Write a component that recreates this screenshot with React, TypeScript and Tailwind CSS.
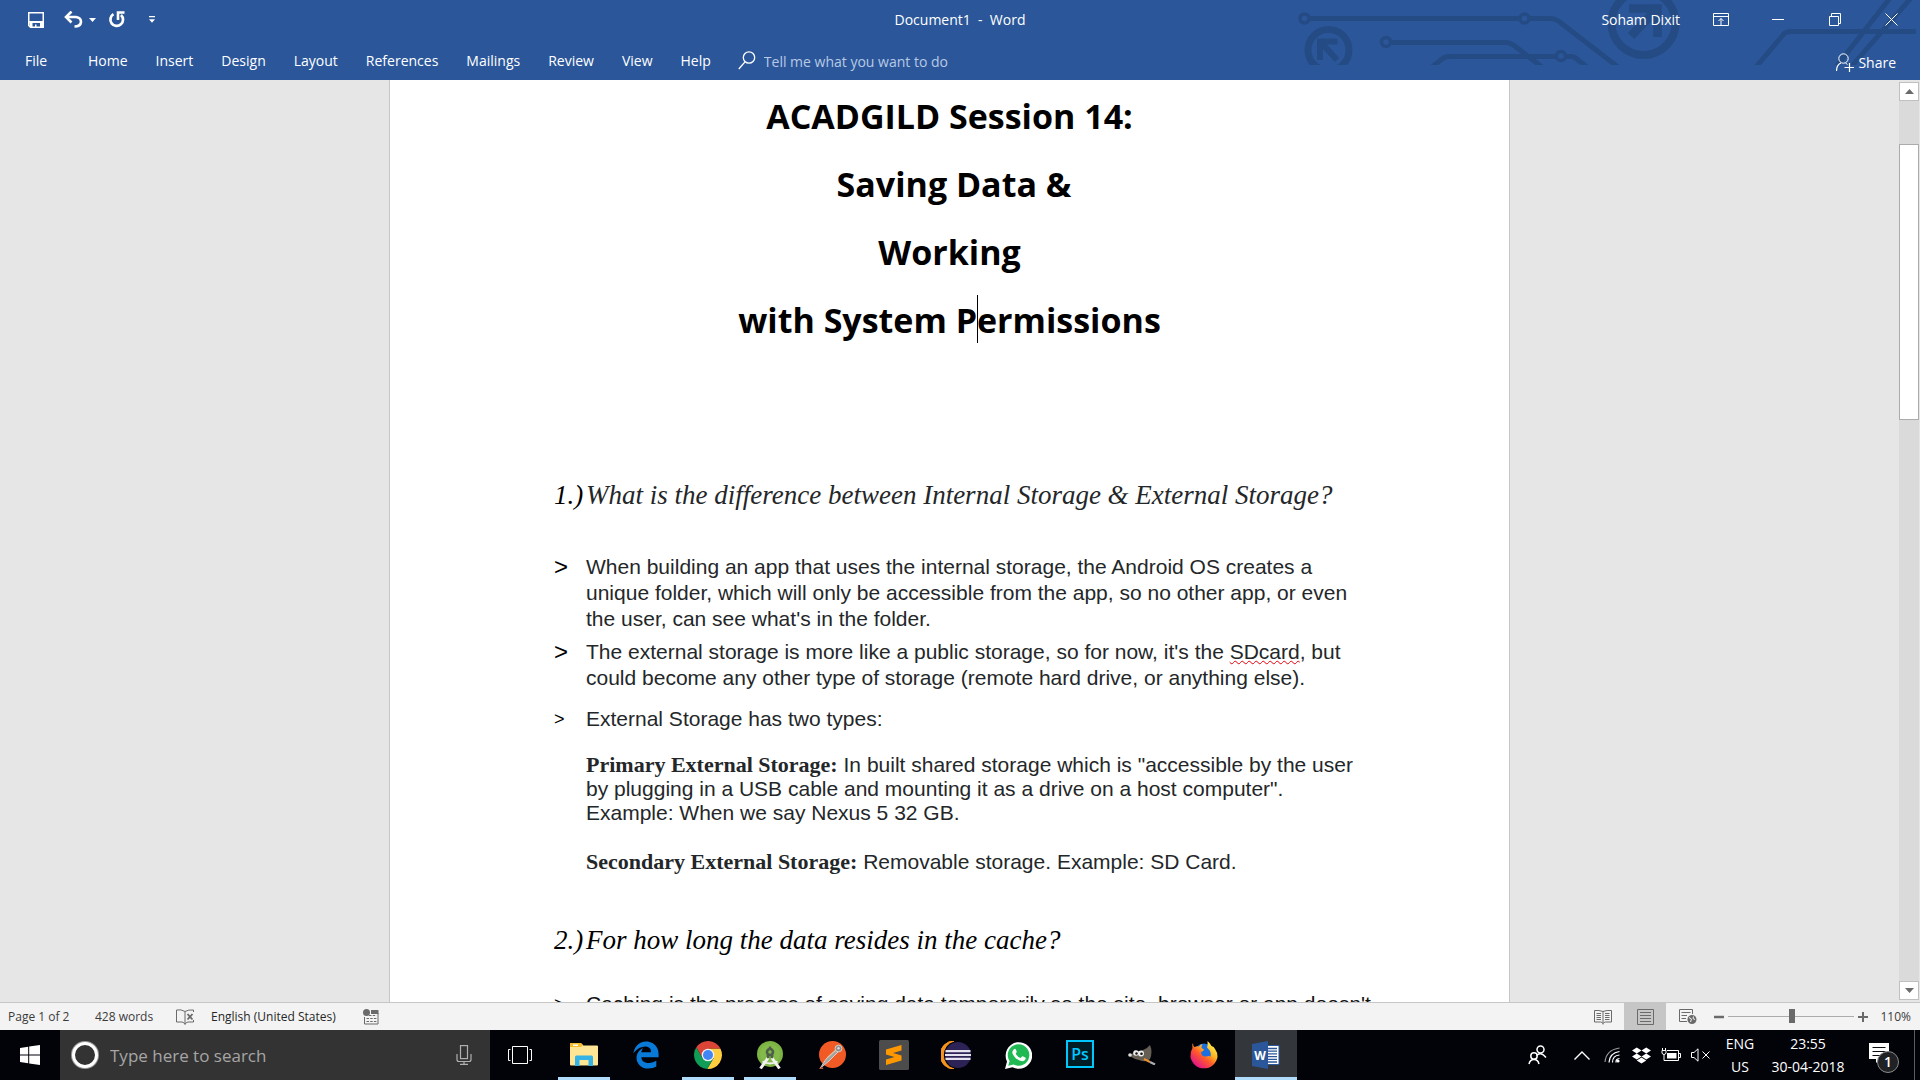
import type { ReactNode } from "react";
import { FaDropbox, FaEdgeLegacy } from "react-icons/fa";

const ui = "font-['Open_Sans','Noto_Sans',sans-serif]";

/* ---------- Title bar ---------- */

function HeaderPattern() {
  return (
    <svg className="pointer-events-none absolute top-0 right-0" width="640" height="65" viewBox="0 0 640 65" fill="none" stroke="#254b84" strokeWidth="5" aria-hidden="true">
      <circle cx="24.5" cy="18.5" r="4.5" strokeWidth="3.5" />
      <path d="M29 18.5H240M249 18.5H270Q276 18.5 281 23L338 67" />
      <circle cx="244.5" cy="18.5" r="4.5" strokeWidth="3.5" />
      <circle cx="48.5" cy="50" r="20.5" strokeWidth="7" />
      <path d="M57.500 41.500H40V60M41 42.500L57 60" strokeWidth="6" />
      <circle cx="106" cy="42" r="4.500" strokeWidth="3.500" />
      <path d="M111 42.500H225Q231 42.500 236 47L262 67" />
      <path d="M152 67L162 59Q165 56.500 170 56.500H276" />
      <circle cx="281" cy="56" r="4.500" strokeWidth="3.500" />
      <path d="M286 56.500H291Q295 56.500 298 60L307 67" />
      <circle cx="363.500" cy="23" r="32" strokeWidth="8" />
      <path d="M349 8.500H377.500V37" strokeWidth="8.500" />
      <path d="M351 36L376 10" strokeWidth="9" />
      <path d="M476 67L503 35Q505.500 31.500 511 31.500H636" />
      <path d="M556 67L610 -2M571 67L631 -2" />
    </svg>
  );
}

function IconButton({ label, className, children }: { label: string; className?: string; children: ReactNode }) {
  return (
    <button type="button" aria-label={label} className={"flex shrink-0 items-center justify-center " + (className ?? "")}>
      {children}
    </button>
  );
}

function TitleBar() {
  return (
    <div className="relative grid h-[39px] grid-cols-[1fr_auto_1fr] items-center text-sm">
      <div className="flex items-center pl-7">
        <IconButton label="Save">
          <svg width="16" height="16" viewBox="0 0 16 16" fill="none" stroke="#fff">
            <path d="M.75 .75H15.250V15.250H2.500L.75 13.500Z" strokeWidth="1.500" />
            <path d="M1 9H15V15H12V11H4.500V15H2Z" fill="#fff" stroke="none" />
            <path d="M7 12.500H8.500V16H7Z" fill="#fff" stroke="none" />
          </svg>
        </IconButton>
        <IconButton label="Undo" className="ml-5">
          <svg width="19" height="17" viewBox="0 0 19 17" fill="none" stroke="#fff">
            <path d="M3 6H12Q17 6.500 17 11Q16.500 15.500 10.500 15.500" strokeWidth="2.600" />
            <path d="M7.500 .500L2 6L7.500 11.500" strokeWidth="2.600" />
          </svg>
        </IconButton>
        <IconButton label="Undo list" className="ml-1.5">
          <svg width="7" height="4" viewBox="0 0 7 4"><path d="M0 0H7L3.500 4Z" fill="#fff" /></svg>
        </IconButton>
        <IconButton label="Repeat" className="ml-3">
          <svg width="17" height="17" viewBox="0 0 17 17" fill="none" stroke="#fff">
            <path d="M5.500 3.200A6.300 6.300 0 1 0 13 4" strokeWidth="2.700" />
            <path d="M10 9V1.500H16.500" strokeWidth="2.600" />
          </svg>
        </IconButton>
        <IconButton label="Customize toolbar" className="ml-6">
          <svg width="6" height="7" viewBox="0 0 6 7"><path d="M0 0H6V1.200H0ZM0 3.200H6L3 6.800Z" fill="#fff" /></svg>
        </IconButton>
      </div>
      <div className="whitespace-pre">Document1  -  Word</div>
      <div className="flex h-full items-center justify-end">
        <span className="pr-3">Soham Dixit</span>
        <IconButton label="Ribbon display options" className="h-full w-[57px]">
          <svg width="16" height="13" viewBox="0 0 16 13" fill="none" stroke="#fff">
            <path d="M.5 .5H15.500V12.500H.5ZM.5 3.500H15.500M8 12V5.500M5.500 8L8 5.500L10.500 8" />
          </svg>
        </IconButton>
        <IconButton label="Minimize" className="h-full w-[57px]">
          <svg width="12" height="13" viewBox="0 0 12 13"><path d="M0 6.500H12" stroke="#fff" /></svg>
        </IconButton>
        <IconButton label="Restore" className="h-full w-[57px]">
          <svg width="12" height="13" viewBox="0 0 12 13" fill="none" stroke="#fff">
            <path d="M.5 3.500H9.500V12.500H.5ZM2.500 3.500V.5H11.500V10.500H9.500" />
          </svg>
        </IconButton>
        <IconButton label="Close" className="h-full w-[57px]">
          <svg width="13" height="13" viewBox="0 0 13 13" fill="none" stroke="#fff"><path d="M.5 .5L12.500 12.500M12.500 .5L.5 12.500" /></svg>
        </IconButton>
      </div>
    </div>
  );
}

const tabs = ["Home", "Insert", "Design", "Layout", "References", "Mailings", "Review", "View", "Help"];

function Ribbon() {
  return (
    <nav className="relative flex h-[41px] items-center pt-0.5 pl-[25px] text-sm">
      <button type="button" className="w-[63px] text-left">File</button>
      <div className="flex items-center gap-7">
        {tabs.map((t) => (
          <button key={t} type="button">{t}</button>
        ))}
      </div>
      <label className="ml-[27px] flex items-center gap-2 text-[#b8c9e6]">
        <svg width="18" height="19" viewBox="0 0 18 19" fill="none" stroke="#fff" strokeWidth="1.300" aria-hidden="true">
          <circle cx="11" cy="6.500" r="5.700" />
          <path d="M7 10.800L.8 18" />
        </svg>
        <input type="text" aria-label="Tell me what you want to do" placeholder="Tell me what you want to do" className="w-56 bg-transparent pt-0.5 outline-none placeholder:text-[#b8c9e6]" />
      </label>
      <button type="button" className="mr-6 ml-auto flex items-center gap-1 pt-1">
        <svg width="18" height="19" viewBox="0 0 18 19" fill="none" stroke="#fff" aria-hidden="true">
          <circle cx="7.500" cy="5.500" r="4.700" />
          <path d="M.5 18C.5 13.500 2.500 11 5 10M8.500 14.500H18M13.500 10V19" strokeWidth="1.200" />
          <path d="M9.500 10L11.500 11.500" />
        </svg>
        Share
      </button>
    </nav>
  );
}

/* ---------- Document ---------- */

function Question({ n, className, children }: { n: string; className?: string; children: ReactNode }) {
  return (
    <h2 className={"flex font-['Liberation_Serif',serif] text-[27px] leading-8 whitespace-nowrap italic " + (className ?? "")}>
      <span className="w-8 shrink-0 text-black">{n}</span>
      <span>{children}</span>
    </h2>
  );
}

function Bullet({ small, className, children }: { small?: boolean; className?: string; children: ReactNode }) {
  return (
    <li className={"flex leading-[26px] " + (className ?? "")}>
      <span className={"w-8 shrink-0 text-black " + (small ? "text-lg leading-[26px]" : "text-2xl leading-[26px]")}>&gt;</span>
      <p>{children}</p>
    </li>
  );
}

function Term({ children }: { children: ReactNode }) {
  return <strong className="font-['Liberation_Serif',serif] text-[22px] leading-none font-bold">{children}</strong>;
}

function Page() {
  return (
    <article className="w-[1121px] shrink-0 overflow-hidden border-x border-[#c6c6c6] bg-white">
      <h1 className="pt-0.5 text-center font-['Open_Sans',sans-serif] text-[34px] leading-[68px] font-bold text-black">
        <span className="block">ACADGILD Session 14:</span>
        <span className="block">&nbsp;Saving Data &amp;</span>
        <span className="block">Working</span>
        <span className="block">
          with System P
          <span className="relative"><i className="absolute -top-0.5 left-0 h-12 w-px bg-black" /></span>
          ermissions
        </span>
      </h1>
      <div className="pt-[125px] pr-[131px] pl-[164px] font-['Liberation_Sans',sans-serif] text-[21px] text-[#242729]">
        <Question n="1.)">What is the difference between Internal Storage &amp; External Storage?</Question>
        <ul className="pt-[43px]">
          <Bullet>
            When building an app that uses the internal storage, the Android OS creates a unique folder, which will only be
            accessible from the app, so no other app, or even the user, can see what's in the folder.
          </Bullet>
          <Bullet className="mt-[7px]">
            The external storage is more like a public storage, so for now, it's the{" "}
            <span className="underline decoration-red-600 decoration-wavy decoration-1 underline-offset-1 [text-decoration-skip-ink:none]">SDcard</span>, but could
            become any other type of storage (remote hard drive, or anything else).
          </Bullet>
          <Bullet small className="mt-[15px]">External Storage has two types:</Bullet>
        </ul>
        <div className="mt-[21px] flex flex-col gap-[25px] pl-8 leading-6">
          <p>
            <Term>Primary External Storage:</Term> In built shared storage which is "accessible by the user by plugging in a USB
            cable and mounting it as a drive on a host computer". <br />Example: When we say Nexus 5 32 GB.
          </p>
          <p><Term>Secondary External Storage:</Term> Removable storage. Example: SD Card.</p>
        </div>
        <Question n="2.)" className="mt-[50px] text-black">For how long the data resides in the cache?</Question>
        <ul className="mt-[35px] text-[#111]">
          <Bullet small>Caching is the process of saving data temporarily so the site, browser or app doesn't</Bullet>
        </ul>
      </div>
    </article>
  );
}

function ScrollBar() {
  return (
    <div className="flex w-[21px] shrink-0 flex-col bg-[#e6e6e6] pt-0.5 pr-px pb-0.5">
      <IconButton label="Scroll up" className="h-[19px] border border-[#c0c0c0] bg-white">
        <svg width="9" height="5" viewBox="0 0 9 5"><path d="M4.500 0L9 5H0Z" fill="#6a6a6a" /></svg>
      </IconButton>
      <div className="flex-1 bg-[#dadada] pt-[43px]">
        <div className="h-[33%] border border-[#ababab] bg-white" />
      </div>
      <IconButton label="Scroll down" className="h-[19px] border border-[#c0c0c0] bg-white">
        <svg width="9" height="5" viewBox="0 0 9 5"><path d="M0 0H9L4.500 5Z" fill="#6a6a6a" /></svg>
      </IconButton>
    </div>
  );
}

/* ---------- Status bar ---------- */

function StatusBar() {
  return (
    <footer className="flex h-7 shrink-0 items-center border-t border-[#c6c6c6] bg-[#f3f3f3] pr-[9px] pl-2 text-xs text-[#3b3b3b]">
      <span className="w-[87px]">Page 1 of 2</span>
      <span className="w-[81px]">428 words</span>
      <IconButton label="Proofing errors">
        <svg width="18" height="16" viewBox="0 0 18 16" fill="none" stroke="#6a6a6a">
          <path d="M9 2.500Q5 0 .5 1V13H6Q8 13 9 15.500Q10 13 12 13H17.500V11M9 2.500V15M9 2.500Q12 .5 17.500 1V3" />
          <path d="M11.500 5L16.500 10.500M16.500 5L11.500 10.500" strokeWidth="1.800" />
        </svg>
      </IconButton>
      <span className="ml-[17px] w-[152px] whitespace-nowrap text-[#262626]">English (United States)</span>
      <IconButton label="Macro recording">
        <svg width="16" height="16" viewBox="0 0 16 16" fill="#6a6a6a">
          <circle cx="3.500" cy="3.500" r="3.500" />
          <path d="M8 1H15.500V5H8Z" />
          <path d="M1.500 8V15H15V4" fill="none" stroke="#6a6a6a" />
          <path d="M3.500 9.500H13.500M3.500 12.500H13.500M6 6.500H13.500" stroke="#6a6a6a" strokeDasharray="2.500 1.200" />
        </svg>
      </IconButton>
      <div className="ml-auto flex h-full items-center">
        <IconButton label="Read mode">
          <svg width="18" height="16" viewBox="0 0 18 16" fill="none" stroke="#6a6a6a">
            <path d="M9 2.500Q5 1 .5 1.500V13H6.500Q8 13 9 14.500Q10 13 11.500 13H17.500V1.500Q13 1 9 2.500V15.500" />
            <path d="M2.500 4.500H7M2.500 6.500H7M2.500 8.500H7M2.500 10.500H7M11 4.500H15.500M11 6.500H15.500M11 8.500H15.500M11 10.500H15.500" />
          </svg>
        </IconButton>
        <IconButton label="Print layout" className="ml-3 h-full w-[42px] bg-[#c6c6c6]">
          <svg width="17" height="16" viewBox="0 0 17 16" fill="none" stroke="#6a6a6a">
            <path d="M.5 .5H16.500V15.500H.5ZM3 3.500H14M3 6.500H14M3 9.500H14M3 12.500H14" />
          </svg>
        </IconButton>
        <IconButton label="Web layout" className="ml-[13px]">
          <svg width="18" height="16" viewBox="0 0 18 16" fill="none" stroke="#6a6a6a">
            <path d="M8 12.500H.5V.5H13.500V5M2.500 3.500H11.500M2.500 6.500H8M2.500 9.500H7" />
            <circle cx="13" cy="10.500" r="4.500" fill="#6a6a6a" stroke="none" />
            <path d="M10 8.500L12.500 10L11.500 13M14.500 7.500L14 9.500L16 10.500" stroke="#f3f3f3" />
          </svg>
        </IconButton>
        <IconButton label="Zoom out" className="ml-[17px]">
          <svg width="10" height="10" viewBox="0 0 10 10"><path d="M0 5H10" stroke="#6a6a6a" strokeWidth="2.500" /></svg>
        </IconButton>
        <input
          type="range"
          aria-label="Zoom"
          min={0}
          max={100}
          defaultValue={51}
          className="mx-1 h-4 w-[126px] appearance-none bg-transparent [&::-webkit-slider-runnable-track]:h-px [&::-webkit-slider-runnable-track]:bg-[#acacac] [&::-webkit-slider-thumb]:-mt-[7px] [&::-webkit-slider-thumb]:h-[14px] [&::-webkit-slider-thumb]:w-1.5 [&::-webkit-slider-thumb]:appearance-none [&::-webkit-slider-thumb]:bg-[#6a6a6a]"
        />
        <IconButton label="Zoom in">
          <svg width="10" height="10" viewBox="0 0 10 10"><path d="M0 5H10M5 0V10" stroke="#6a6a6a" strokeWidth="2" /></svg>
        </IconButton>
        <span className="w-[43px] text-right">110%</span>
      </div>
    </footer>
  );
}

/* ---------- Taskbar ---------- */

function Explorer() {
  return (
    <svg width="28" height="24" viewBox="0 0 28 24">
      <path d="M0 1Q0 0 1 0H10.500L13.500 2.500H27Q28 2.500 28 3.500V21.500Q28 22.500 27 22.500H1Q0 22.500 0 21.500Z" fill="#ffe594" />
      <path d="M0 1Q0 0 1 0H11L13 2L11 4H0Z" fill="#f5bd2b" />
      <path d="M3 1.500H8V3H3Z" fill="#fff" />
      <path d="M5 23V14Q5 12.500 6.500 12.500H21.500Q23 12.500 23 14V23H18.500V17H9.500V23Z" fill="#35b2e6" />
    </svg>
  );
}

function Chrome() {
  return (
    <svg width="28" height="28" viewBox="-14 -14 28 28">
      <path d="M0 -6.300L12.500 -6.300A14 14 0 0 0 -11.700 -7.670L-5.460 3.150L0 0Z" fill="#db4437" />
      <path d="M0 -6.300L12.500 -6.300A14 14 0 0 1 -.79 13.970L5.460 3.150L0 0Z" fill="#ffcd40" />
      <path d="M5.460 3.150L-.79 13.970A14 14 0 0 1 -11.700 -7.670L-5.460 3.150L0 0Z" fill="#0f9d58" />
      <circle r="6.300" fill="#f1f1f1" />
      <circle r="5" fill="#4285f4" />
    </svg>
  );
}

function Studio() {
  return (
    <svg width="26" height="29" viewBox="0 0 26 29">
      <circle cx="13" cy="13" r="13" fill="#7cb342" />
      <circle cx="13" cy="13" r="10" fill="#84ba49" />
      <path d="M11 17L3.500 27.500M15 17L22.500 27.500" stroke="#f2f2f2" strokeWidth="3" />
      <path d="M5.500 20.500Q13 24.500 20.500 20.500" stroke="#f2f2f2" strokeWidth="1.800" fill="none" />
      <path d="M11.800 5.500H14.200V8H11.800Z" fill="#4d5f4a" />
      <circle cx="13" cy="11" r="3" fill="none" stroke="#4d5f4a" strokeWidth="2.600" />
      <path d="M10.500 14L11.500 17M15.500 14L14.500 17" stroke="#4d5f4a" strokeWidth="2.500" />
    </svg>
  );
}

function Postman() {
  return (
    <svg width="28" height="29" viewBox="0 0 28 29">
      <circle cx="14.500" cy="13.500" r="13.500" fill="#f15a24" />
      <path d="M9 16L18 8L20 10L11 19Z" fill="#f7a04a" />
      <path d="M2 27.500L8 18L19 8L21 10L11 20Z" fill="#a6a29f" stroke="#e6ded8" strokeWidth=".8" />
      <circle cx="20.500" cy="7.500" r="3.400" fill="#8f8c89" stroke="#ddd" strokeWidth=".8" />
      <circle cx="20.500" cy="7.200" r="1.200" fill="#ddd" />
      <path d="M1 28L4 25.500L5.500 28Z" fill="#b5543a" />
    </svg>
  );
}

function Sublime() {
  return (
    <svg width="30" height="30" viewBox="0 0 30 30">
      <rect width="30" height="30" rx="1.500" fill="#4c4c4c" />
      <path d="M7 9.500L22.500 5V10.500L14 13L22.500 15.500V20.500L7 25V19.500L15.500 17L7 14.500Z" fill="#ff9800" />
    </svg>
  );
}

function Eclipse() {
  return (
    <svg width="30" height="28" viewBox="0 0 30 28">
      <path d="M13 0A14 14 0 0 0 13 28A14.500 14.500 0 0 1 13 0Z" fill="#f7941e" stroke="#f7941e" />
      <circle cx="17" cy="14" r="13" fill="#2c2255" />
      <path d="M4.500 10.200H29.500M4 14H30M4.500 17.800H29.500" stroke="#e6e3f0" strokeWidth="2.200" />
    </svg>
  );
}

function WhatsApp() {
  return (
    <svg width="27" height="27" viewBox="0 0 27 27">
      <path d="M0 27L2 19.500A13.300 13.300 0 1 1 7.500 25.200Z" fill="#fff" />
      <path d="M3.300 23.700L4.600 19A10.800 10.800 0 1 1 8.500 22.500Z" fill="#20b954" />
      <path d="M9 7.200Q10.200 6.400 10.800 7.500L11.700 9.600Q11.900 10.400 10.700 11.700Q12.500 15 15.600 16.100L17 14.400Q17.500 14 18.200 14.400L20.300 15.500Q20.900 16 20.500 17.200Q19.500 19.300 17 19.300Q13.500 18.800 10.500 15.900Q7.300 12.500 7.300 10.200Q7.500 8 9 7.200Z" fill="#fff" />
    </svg>
  );
}

function Photoshop() {
  return (
    <span className="mb-0.5 flex size-7 items-center justify-center border-2 border-[#00c8ff] bg-[#001d26] font-['Open_Sans',sans-serif] text-base leading-none font-semibold text-[#00c8ff]">
      Ps
    </span>
  );
}

function Gimp() {
  return (
    <svg width="28" height="20" viewBox="0 0 28 20">
      <path d="M7 5Q9 8 14 5.500Q19 4 22 0Q25 7 22 14Q18 18 11 15Q6 14 1.500 11Q1 9 5 8.500Z" fill="#655e52" />
      <circle cx="8" cy="8" r="2.800" fill="#eee" />
      <circle cx="13" cy="8.500" r="3" fill="#eee" />
      <circle cx="8.500" cy="8.500" r="1.200" fill="#111" />
      <circle cx="13.500" cy="8.800" r="1.300" fill="#111" />
      <circle cx="2" cy="10" r="1.800" fill="#e0e0e0" />
      <path d="M16 14L22 17" stroke="#e8912d" strokeWidth="2" />
      <path d="M22 17L27 19.500" stroke="#a7aeb5" strokeWidth="2.200" />
    </svg>
  );
}

function Firefox() {
  return (
    <svg width="28" height="28" viewBox="0 0 28 28">
      <defs>
        <linearGradient id="fox" x1=".85" y1=".1" x2=".2" y2=".9">
          <stop offset="0" stopColor="#fff44f" />
          <stop offset=".35" stopColor="#ffb21f" />
          <stop offset=".6" stopColor="#ff5a2b" />
          <stop offset="1" stopColor="#e31587" />
        </linearGradient>
      </defs>
      <circle cx="14" cy="12.500" r="10" fill="#1d6fe0" />
      <path d="M3 2Q3 5 4.500 6Q7 5 9 5.500Q10 3.500 12.500 3Q11 5.500 11.500 7L14 8.500Q13.500 10.500 11 11Q11.500 16 16 15.500Q19 14.500 20.500 15.500Q22 11 17 6.500Q18 4 17.500 0Q20 2 21.500 5Q24 5.500 25 8Q28 12 27.500 16A13.700 13.700 0 0 1 .5 16Q0 11 2.500 7Q1.500 4 3 2Z" fill="url(#fox)" />
    </svg>
  );
}

function WordIcon() {
  return (
    <svg width="28" height="28" viewBox="0 0 28 28">
      <path d="M14 4.500H27V23.500H14Z" fill="#fff" stroke="#2b579a" />
      <path d="M16 7.500H25M16 10.200H25M16 12.900H25M16 15.600H25M16 18.300H25M16 21H25" stroke="#2b579a" strokeWidth="1.300" />
      <path d="M0 3L16 0V28L0 25Z" fill="#2b579a" />
      <text x="8" y="18.500" textAnchor="middle" fontFamily="Open Sans" fontWeight="700" fontSize="12" fill="#fff">W</text>
    </svg>
  );
}

const apps: { name: string; icon: ReactNode; running?: boolean; active?: boolean }[] = [
  { name: "File Explorer", icon: <Explorer />, running: true },
  { name: "Edge", icon: <FaEdgeLegacy className="size-7 text-[#0a7ad8]" /> },
  { name: "Chrome", icon: <Chrome />, running: true },
  { name: "Android Studio", icon: <Studio />, running: true },
  { name: "Postman", icon: <Postman /> },
  { name: "Sublime Text", icon: <Sublime /> },
  { name: "Eclipse", icon: <Eclipse /> },
  { name: "WhatsApp", icon: <WhatsApp /> },
  { name: "Photoshop", icon: <Photoshop /> },
  { name: "GIMP", icon: <Gimp /> },
  { name: "Firefox", icon: <Firefox /> },
  { name: "Word", icon: <WordIcon />, running: true, active: true },
];

function Tray() {
  return (
    <div className="ml-auto flex h-full items-center text-white">
      <IconButton label="People">
        <svg width="19" height="20" viewBox="0 0 19 20" fill="none" stroke="#fff" strokeWidth="1.500">
          <circle cx="12.500" cy="4.500" r="3.500" />
          <path d="M8.500 10.500Q12.500 6 18 12.500" />
          <circle cx="6" cy="11" r="3.200" />
          <path d="M1 19Q2 14.500 6 14.500Q10 14.500 11 19" />
        </svg>
      </IconButton>
      <IconButton label="Hidden icons" className="ml-[27px]">
        <svg width="16" height="9" viewBox="0 0 16 9" fill="none" stroke="#fff" strokeWidth="1.400"><path d="M.5 8.500L8 1L15.500 8.500" /></svg>
      </IconButton>
      <IconButton label="Network" className="ml-3.5">
        <svg width="16" height="16" viewBox="0 0 16 16" fill="none" stroke="#fff" strokeWidth="1.200">
          <path d="M12 15.500Q11.500 12 15.500 11.500" />
          <circle cx="14" cy="14" r="1.600" fill="#fff" stroke="none" />
          <path d="M8.500 15.500Q8.500 8.500 15.500 8M5 15.500Q5.500 6 15.500 4.500" />
          <path d="M1 15Q2 3 15.500 1" stroke="#999" />
        </svg>
      </IconButton>
      <FaDropbox className="ml-3 size-[19px]" aria-label="Dropbox" />
      <IconButton label="Battery" className="ml-2.5">
        <svg width="20" height="14" viewBox="0 0 20 14" fill="none" stroke="#fff">
          <path d="M5 12.500H17.500V2.500H6M18 5.500H19.500V9.500H18" />
          <path d="M6 5H15.500V10.500H6Z" fill="#fff" stroke="none" />
          <path d="M1 2.500H5V5Q4.500 6.500 3 6.500Q1.500 6.500 1 5ZM1.500 0V2.500M4.500 0V2.500M3 6.500V12.500H5" />
        </svg>
      </IconButton>
      <IconButton label="Volume muted" className="ml-2.5">
        <svg width="19" height="14" viewBox="0 0 19 14" fill="none" stroke="#fff">
          <path d="M.5 4.500H3L7 .8V13.200L3 9.500H.5ZM11.500 3.500L18.500 10.500M18.500 3.500L11.500 10.500" />
        </svg>
      </IconButton>
      <button type="button" className="ml-1 w-[52px] text-center text-sm leading-[23px]">
        <span className="block">ENG</span>
        <span className="block">US</span>
      </button>
      <button type="button" className="w-[84px] text-center text-sm leading-[23px]">
        <span className="block">23:55</span>
        <span className="block">30-04-2018</span>
      </button>
      <button type="button" aria-label="1 notification" className="relative ml-[19px] mb-1">
        <svg width="20" height="20" viewBox="0 0 20 20">
          <path d="M0 0H20V16H11L7 20V16H0Z" fill="#fff" />
          <path d="M3.500 4.500H16.500M3.500 8.500H16.500M3.500 12.500H11" stroke="#0a0c12" />
        </svg>
        <span className="absolute top-2 left-2 flex size-[22px] items-center justify-center rounded-full border border-[#8a8a8a] bg-[#1f2124] text-sm leading-none font-semibold">1</span>
      </button>
      <div className="mr-[5px] ml-[25px] h-full w-px bg-[#5a5c60]" />
    </div>
  );
}

function Taskbar() {
  return (
    <div className="flex h-[50px] shrink-0 items-center bg-[#010309]">
      <IconButton label="Start" className="h-full w-[60px]">
        <svg width="20" height="20" viewBox="0 0 20 20" fill="#fff">
          <path d="M0 3L8.200 1.800V9.500H0ZM9.200 1.600L20 0V9.500H9.200ZM0 10.500H8.200V18.200L0 17ZM9.200 10.500H20V20L9.200 18.400Z" />
        </svg>
      </IconButton>
      <label className="flex h-full w-[430px] items-center bg-[#333] pr-[18px] pl-[11px]">
        <svg width="28" height="28" viewBox="0 0 28 28" fill="none" aria-hidden="true">
          <circle cx="14" cy="14" r="13" stroke="#9a9a9a" strokeWidth="2" />
          <circle cx="14" cy="14" r="11.500" stroke="#fff" strokeWidth="3" />
        </svg>
        <input type="text" aria-label="Type here to search" placeholder="Type here to search" className="ml-[11px] min-w-0 flex-1 bg-transparent pt-0.5 text-[17px] outline-none placeholder:text-[#a6a6a6]" />
        <svg width="16" height="20" viewBox="0 0 16 20" fill="none" stroke="#b0b0b0" strokeWidth="1.200" aria-hidden="true">
          <rect x="4.500" y=".6" width="7" height="13" />
          <path d="M1 9V14.500Q1 16.500 3 16.500H13Q15 16.500 15 14.500V9M8 16.500V19.400M4 19.400H12" />
        </svg>
      </label>
      <IconButton label="Task view" className="h-full w-[63px] pr-[3px]">
        <svg width="24" height="18" viewBox="0 0 24 18" fill="none" stroke="#fff">
          <path d="M4.500 .5H19.500V17.500H4.500ZM2.500 3.500H.5V14.500H2.500M21.500 3.500H23.500V14.500H21.500" />
        </svg>
      </IconButton>
      {apps.map((a) => (
        <button key={a.name} type="button" aria-label={a.name} className={"relative flex h-full w-[62px] shrink-0 items-center justify-center " + (a.active ? "bg-[#33363b]" : "")}>
          {a.icon}
          {a.running && <span className={"absolute bottom-0 h-[3px] bg-[#b0dcfb] " + (a.active ? "inset-x-0" : "inset-x-[5px]")} />}
        </button>
      ))}
      <Tray />
    </div>
  );
}

export default function App() {
  return (
    <div className={"flex h-screen min-w-0 flex-col overflow-hidden " + ui}>
      <header className="relative shrink-0 bg-[#2b579a] text-white">
        <HeaderPattern />
        <TitleBar />
        <Ribbon />
      </header>
      <main className="flex min-h-0 flex-1 bg-[#e6e6e6]">
        <div className="flex min-w-0 flex-1 justify-center overflow-hidden">
          <Page />
        </div>
        <ScrollBar />
      </main>
      <StatusBar />
      <Taskbar />
    </div>
  );
}
